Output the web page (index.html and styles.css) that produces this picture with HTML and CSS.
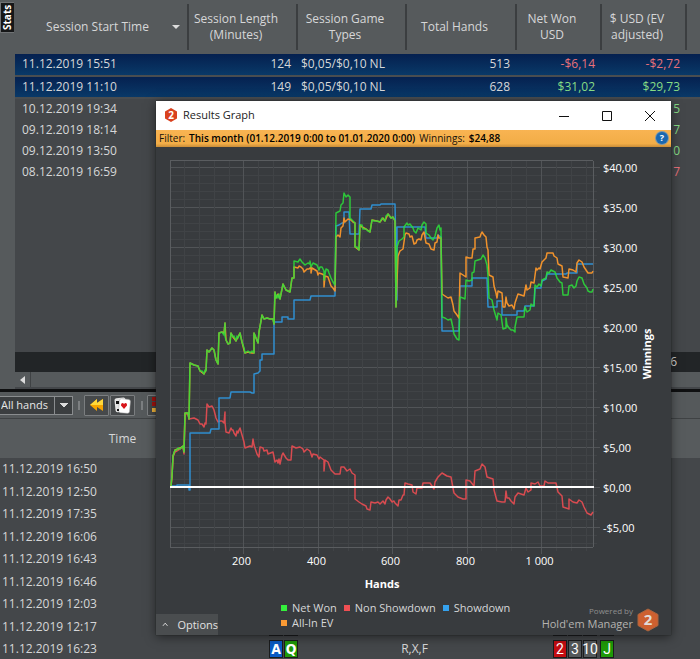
FILE: index.html
```
<!DOCTYPE html>
<html lang="en">
<head>
    <meta charset="UTF-8">
    <meta name="viewport" content="width=device-width, initial-scale=1.0">
    <title>Results Graph</title>
    <link rel="stylesheet" href="styles.css">
</head>

<body>
    <main class="app">
        <section class="sessions">
            <aside class="side">
                <button class="stats-tab">Stats</button>
            </aside>
            <div class="sessions-main">
                <table class="session-table">
                    <colgroup>
                        <col class="col-start">
                        <col class="col-length">
                        <col class="col-types">
                        <col class="col-hands">
                        <col class="col-money">
                        <col class="col-money">
                        <col>
                    </colgroup>
                    <thead>
                        <tr>
                            <th class="sorted">Session Start Time</th>
                            <th>Session Length (Minutes)</th>
                            <th>Session Game Types</th>
                            <th>Total Hands</th>
                            <th>Net Won USD</th>
                            <th>$ USD (EV adjusted)</th>
                            <th></th>
                        </tr>
                    </thead>
                    <tbody>
                        <tr class="selected"><td>11.12.2019 15:51</td><td class="num">124</td><td class="types">$0,05/$0,10 NL</td><td class="num">513</td><td class="num loss">-$6,14</td><td class="num loss">-$2,72</td><td></td></tr>
                        <tr class="selected"><td>11.12.2019 11:10</td><td class="num">149</td><td class="types">$0,05/$0,10 NL</td><td class="num">628</td><td class="num win">$31,02</td><td class="num win">$29,73</td><td></td></tr>
                        <tr><td>10.12.2019 19:34</td><td></td><td></td><td></td><td></td><td class="num win">5</td><td></td></tr>
                        <tr><td>09.12.2019 18:14</td><td></td><td></td><td></td><td></td><td class="num win">7</td><td></td></tr>
                        <tr><td>09.12.2019 13:50</td><td></td><td></td><td></td><td></td><td class="num win">0</td><td></td></tr>
                        <tr><td>08.12.2019 16:59</td><td></td><td></td><td></td><td></td><td class="num loss">7</td><td></td></tr>
                    </tbody>
                </table>
                <div class="summary">6</div>
                <div class="scrollbar">
                    <button class="scroll-left" aria-label="Scroll left"></button>
                </div>
            </div>
        </section>

        <div class="toolbar">
            <select class="hand-filter" aria-label="Hands filter">
                <option>All hands</option>
            </select>
            <span class="grip"></span>
            <button class="tool" aria-label="Rewind">
                <svg width="14" height="12" viewBox="0 0 14 12">
                    <path d="M7 0v4l6-4v12l-6-4v4L0 6z" fill="#f5a300"/>
                    <path d="M7 0v4l6-4v6H0z" fill="#ffd83a"/>
                </svg>
            </button>
            <button class="tool" aria-label="Cards">
                <svg width="17" height="17" viewBox="0 0 17 17">
                    <rect x="1" y="1" width="11" height="14" rx="2" fill="#e4e4e4" transform="rotate(-6 6 8)"/>
                    <rect x="5" y="2" width="11" height="14" rx="2" fill="#fff" stroke="#aaa" stroke-width=".5" transform="rotate(5 10 9)"/>
                    <path d="M2 4h3v3H2zM3 12h2v2H3z" fill="#111"/>
                    <path d="M10 12L7 8.500Q6.700 6 8.500 6 9.600 6 10 7.200 10.600 6 11.600 6 13.500 6.200 13 8.500z" fill="#d8151b"/>
                </svg>
            </button>
            <span class="grip"></span>
            <button class="tool" aria-label="Replay">
                <svg width="16" height="16" viewBox="0 0 16 16">
                    <path d="M0 0h4v4H0zM0 5h4v4H0zM6 0h4v4H6z" fill="#a3130f"/>
                    <path d="M0 11h4v4H0zM6 6h4v4H6z" fill="#f0b43c"/>
                </svg>
            </button>
        </div>

        <table class="hand-table">
            <colgroup>
                <col class="col-time">
                <col class="col-hole">
                <col class="col-line">
                <col>
            </colgroup>
            <thead>
                <tr><th>Time</th><th></th><th></th><th></th></tr>
            </thead>
            <tbody>
                <tr><td>11.12.2019 16:50</td><td></td><td></td><td></td></tr>
                <tr><td>11.12.2019 12:50</td><td></td><td></td><td></td></tr>
                <tr><td>11.12.2019 17:35</td><td></td><td></td><td></td></tr>
                <tr><td>11.12.2019 16:06</td><td></td><td></td><td></td></tr>
                <tr><td>11.12.2019 16:43</td><td></td><td></td><td></td></tr>
                <tr><td>11.12.2019 16:46</td><td></td><td></td><td></td></tr>
                <tr><td>11.12.2019 12:03</td><td></td><td></td><td></td></tr>
                <tr>
                    <td>11.12.2019 12:17</td>
                    <td><div class="cards hole"><span class="card heart"></span><span class="card club"></span></div></td>
                    <td></td>
                    <td><div class="cards board"><span class="card diamond"></span><span class="card club"></span><span class="card club"></span><span class="card heart turn"></span></div></td>
                </tr>
                <tr>
                    <td>11.12.2019 16:23</td>
                    <td><div class="cards hole"><span class="card diamond">A</span><span class="card club">Q</span></div></td>
                    <td class="line">R,X,F</td>
                    <td><div class="cards board"><span class="card heart">2</span><span class="card spade">3</span><span class="card spade">10</span><span class="card club turn">J</span></div></td>
                </tr>
            </tbody>
        </table>
    </main>

    <section class="window">
        <header class="titlebar">
            <svg class="app-icon" width="12" height="14" viewBox="0 0 12 14">
                <path d="M6 0l6 3.500v7L6 14 0 10.500v-7z" fill="#d9411e"/>
                <text x="6" y="11" class="icon-two">2</text>
            </svg>
            <h1>Results Graph</h1>
            <button class="win-btn" aria-label="Minimize"><svg width="12" height="12"><path d="M1 6.500h10"/></svg></button>
            <button class="win-btn" aria-label="Maximize"><svg width="12" height="12"><path d="M1.500 1.500h9v9h-9z"/></svg></button>
            <button class="win-btn" aria-label="Close"><svg width="12" height="12"><path d="M1 1l10 10M11 1L1 11"/></svg></button>
        </header>
        <div class="filter">
            <span>Filter:</span>
            <b>This month (01.12.2019 0:00 to 01.01.2020 0:00)</b>
            <span>Winnings:</span>
            <b>$24,88</b>
            <button class="help" aria-label="Help">?</button>
        </div>

        <svg class="chart" viewBox="156 147 515 452">
            <g id="grid"></g>
            <g class="series">
                <polyline class="non-showdown" points="171,487 172,477 173,457 175,452 180,449 183,447 184,454 185,414 188,414 189,419 194,418 196,419 198,420 200,424 202,424 204,427 205,423 206,424 207,404 209,407 212,406 214,410 216,418 218,422 220,421 222,421 224,423 225,412 225,422 226,432 229,433 231,428 232,430 233,430 234,433 236,436 237,431 238,433 239,430 240,428 242,435 244,442 245,448 250,446 252,447 253,439 254,445 257,454 259,457 260,447 263,448 264,451 267,450 268,454 273,452 274,457 275,462 277,460 278,463 279,459 280,464 282,455 283,453 286,458 288,460 291,460 292,446 296,448 300,447 303,449 304,452 307,449 310,451 312,457 313,454 317,455 319,459 320,457 324,460 324,471 325,460 328,462 331,470 333,472 335,474 340,474 341,467 344,467 347,471 350,469 352,473 355,475 355,499 359,502 362,504 366,506 367,509 370,510 371,502 375,503 378,502 380,504 383,501 385,504 386,500 388,497 390,499 392,502 394,501 395,503 398,506 399,500 401,500 403,495 404,495 405,483 408,484 412,485 413,492 416,494 417,488 422,488 423,483 430,483 432,486 434,489 435,482 438,477 442,473 447,476 451,477 453,488 454,493 458,497 463,499 466,499 466,480 470,481 474,486 475,471 480,469 482,464 485,467 487,477 493,479 494,490 497,501 502,502 505,502 506,491 507,498 509,498 511,501 514,504 515,497 518,493 524,495 526,488 528,492 531,490 531,483 535,484 538,482 540,486 544,486 545,481 548,483 556,483 558,492 560,494 562,496 563,507 569,509 569,499 573,502 577,503 579,500 582,502 584,507 587,513 591,515 593,512"/>
                <polyline class="showdown" points="171,486 177,486 177,485 189,485 189,490 190,490 190,433 210,433 211,429 219,429 219,398 230,398 231,392 250,392 252,393 254,393 254,374 258,373 260,371 260,360 262,360 262,354 274,354 274,322 282,322 282,317 288,317 288,319 294,319 294,300 310,300 311,296 335,296 336,226 339,225 342,223 344,223 344,212 349,212 350,234 359,234 360,209 371,209 372,205 380,205 381,204 395,204 397,300 397,227 425,227 426,238 437,238 438,235 441,237 442,331 459,331 460,286 472,286 472,278 487,278 488,307 497,307 497,301 502,301 502,315 517,315 517,311 524,311 525,306 534,306 535,288 541,288 542,281 546,279 547,274 566,274 567,273 577,273 577,264 593,264"/>
                <polyline class="all-in" points="171,486 172,476 173,456 175,450 180,448 183,446 184,452 185,413 188,413 189,419 190,363 194,365 198,366 200,371 204,374 206,370 207,350 209,352 212,348 214,350 216,360 218,364 219,333 222,332 224,333 225,323 226,340 228,344 230,343 231,333 233,337 236,341 238,337 240,333 242,342 244,350 245,353 248,352 252,353 254,353 254,333 256,338 258,343 259,332 261,321 262,315 264,319 267,318 270,319 273,319 274,324 275,292 276,298 278,294 280,299 282,289 283,284 286,290 290,292 292,278 294,278 294,267 298,268 299,266 301,267 303,269 304,272 307,269 309,269 311,267 311,273 312,268 317,271 318,275 319,273 322,274 324,275 324,287 325,276 328,277 330,283 331,286 333,288 335,291 336,237 338,235 340,237 341,228 343,226 344,218 345,222 348,219 351,220 353,222 355,223 355,247 359,250 360,225 362,227 366,229 370,232 372,220 377,221 380,222 383,218 385,221 388,214 391,218 393,217 395,221 396,307 398,256 400,251 403,249 405,235 406,233 409,234 410,237 412,236 414,244 416,243 417,240 419,239 421,240 422,235 424,232 426,243 429,244 431,249 434,250 435,243 437,242 438,235 439,238 441,238 442,294 445,296 448,298 451,297 453,305 454,311 457,315 459,318 460,273 463,275 466,277 466,257 469,258 472,258 473,249 475,249 475,238 480,237 481,234 482,232 484,235 486,237 487,247 488,250 489,275 493,277 494,286 496,293 497,298 498,291 502,293 503,307 505,307 506,297 507,303 509,306 512,305 514,309 515,303 518,294 524,296 526,285 527,290 530,288 531,282 534,283 536,268 537,270 539,268 540,269 542,262 546,258 547,253 553,253 554,256 557,258 558,264 562,266 563,277 568,278 569,269 573,270 576,272 577,263 579,260 582,262 584,267 588,273 592,273 593,271"/>
                <polyline class="net-won" points="171,486 172,476 173,456 175,450 177,450 178,448 180,449 183,446 184,452 185,413 188,413 189,419 190,363 194,365 198,366 200,371 202,371 204,374 205,370 206,371 207,350 209,352 212,348 214,350 216,360 218,364 219,333 222,332 224,335 225,323 225,336 226,340 228,344 230,343 231,333 233,337 234,336 236,341 237,336 238,338 240,333 242,342 244,348 245,353 248,351 250,353 252,351 254,353 254,333 256,338 258,343 259,332 261,321 262,315 264,319 267,318 270,319 273,319 274,324 275,292 276,298 277,295 278,298 279,294 280,299 282,289 283,284 286,290 290,292 292,278 294,278 294,261 298,262 300,259 302,262 305,265 308,263 310,264 310,261 311,267 313,263 317,265 319,270 320,267 322,267 324,271 324,280 326,269 328,270 329,273 331,278 333,282 335,285 336,213 338,212 340,211 341,205 343,203 344,193 346,197 348,195 350,197 350,218 353,221 355,223 355,247 357,247 359,250 360,225 362,225 363,229 366,229 368,231 370,232 372,220 374,221 377,221 380,222 382,218 385,221 386,216 388,214 391,218 393,217 395,221 396,307 397,247 399,241 402,239 404,237 404,227 407,223 408,225 410,224 413,228 414,231 416,233 418,228 421,230 422,225 424,222 426,224 426,233 429,235 431,238 433,240 435,236 437,228 439,225 440,230 441,228 442,317 445,318 448,320 451,319 453,328 454,334 457,339 459,340 460,297 463,298 465,299 466,280 469,281 472,280 472,273 474,272 475,261 478,260 481,259 483,255 485,258 487,265 488,276 489,298 492,300 494,310 497,320 498,313 501,315 503,329 506,328 506,318 507,325 509,328 511,330 513,330 515,332 515,327 517,317 522,317 524,317 525,307 527,312 530,310 531,304 534,306 535,285 537,287 539,284 541,286 542,280 546,278 547,272 549,273 551,270 555,272 557,278 560,282 562,283 563,295 568,295 569,286 572,285 574,288 576,286 577,281 579,277 582,278 584,284 587,288 588,291 590,292 592,292 593,289"/>
            </g>
            <path class="zero" d="M170 487h424"/>
            <g id="labels"></g>
            <text class="axis-title" x="382" y="588">Hands</text>
            <text class="axis-title" transform="translate(651 354) rotate(-90)">Winnings</text>
        </svg>

        <footer class="window-footer">
            <button class="options">
                <svg width="7" height="5" viewBox="0 0 7 5"><path d="M1 4l2.500-3L6 4"/></svg>
                Options
            </button>
            <ul class="legend">
                <li class="net-won">Net Won</li>
                <li class="non-showdown">Non Showdown</li>
                <li class="showdown">Showdown</li>
                <li class="all-in">All-In EV</li>
            </ul>
            <div class="powered">
                <div>
                    <small>Powered by</small>
                    <span class="brand">Hold'em Manager</span>
                </div>
                <svg width="22" height="24" viewBox="0 0 22 24">
                    <path d="M11 1l10 5.500v11L11 23 1 17.500v-11z" fill="#cd6030" stroke="#a8653f"/>
                    <text x="11" y="17" class="logo-two">2</text>
                </svg>
            </div>
        </footer>
    </section>

    <script>
        const ns = "http://www.w3.org/2000/svg"
        const grid = document.querySelector("#grid")
        const labels = document.querySelector("#labels")

        // plot area inside the svg
        const left = 170, right = 593, top_edge = 161, bottom = 547
        const zeroY = 487, dollar = 8
        const zeroX = 169, step = 14.88

        function line(cls, x1, y1, x2, y2){
            const el = document.createElementNS(ns, "path")
            el.setAttribute("class", cls)
            el.setAttribute("d", `M${x1} ${y1}L${x2} ${y2}`)
            grid.appendChild(el)
        }

        function label(cls, x, y, value){
            const el = document.createElementNS(ns, "text")
            el.setAttribute("class", cls)
            el.setAttribute("x", x)
            el.setAttribute("y", y)
            el.textContent = value
            labels.appendChild(el)
        }

        // one thin line per dollar and a half step, a thick one every five
        for(let value = -7; value <= 40; value++){
            const y = zeroY - value * dollar + 0.5
            if(value % 5 === 0){
                line("major", left, y, right + 7, y)
                label("tick-y", 603, y + 4, (value < 0 ? "-$" : "$") + Math.abs(value) + ",00")
            }else{
                line("minor", left, y, right + 4, y)
            }
        }

        // every 40 hands
        for(let i = 1; i <= 28; i++){
            const x = Math.round(zeroX + i * step) + 0.5
            if(i % 5 === 0){
                line("major", x, top_edge, x, bottom + 7)
                label("tick-x", x - 2, 565, i === 25 ? "1 000" : i * 40)
            }else{
                line("minor", x, top_edge, x, bottom + 4)
            }
        }

        line("frame", left + 0.5, top_edge, left + 0.5, bottom)
        line("frame", right + 0.5, top_edge, right + 0.5, bottom)
        line("frame", left, top_edge - 0.5, right, top_edge - 0.5)
        line("frame", left, bottom + 0.5, right, bottom + 0.5)
    </script>
</body>
</html>
```
FILE: styles.css
```
*{
    margin: 0;
    padding: 0;
    box-sizing: border-box;
}
body{
    height: 100vh;
    overflow: hidden;
    position: relative;
    background-color: #44474a;
    color: #d6d7d8;
    font-family: "Open Sans", "Noto Sans", sans-serif;
    font-size: 12px;
    line-height: 16px;
}
button, select{
    font: inherit;
    color: inherit;
    border: none;
    background: none;
}
table{
    width: 100%;
    table-layout: fixed;
    border-collapse: collapse;
}
th{
    font-weight: 400;
}
td{
    white-space: nowrap;
}

/* sessions */
.sessions{
    display: flex;
    height: 389px;
    background-color: #565a5c;
}
.side{
    width: 15px;
}
.stats-tab{
    width: 14px;
    height: 31px;
    margin-top: 2px;
    background-color: #161718;
    border: 1px solid #707375;
    border-left: none;
    color: white;
    font-size: 10px;
    font-weight: 700;
    line-height: 11px;
    writing-mode: vertical-rl;
    transform: rotate(180deg);
}
.sessions-main{
    flex: 1;
    min-width: 0;
    display: flex;
    flex-direction: column;
    background-color: #44474a;
}
.col-start{ width: 174px; }
.col-length{ width: 109px; }
.col-types{ width: 109px; }
.col-hands{ width: 110px; }
.col-money{ width: 85px; }
.session-table th{
    height: 54px;
    padding: 0 15px 0 0;
    background: linear-gradient(#3b3e40, #3b3e40) right center / 2px 46px no-repeat #565a5c;
}
.session-table th:last-child{
    background: #565a5c;
}
.session-table .sorted{
    padding-right: 9px;
}
.session-table .sorted::after{
    content: "";
    float: right;
    margin: 6px 0 0 -8px;
    border: 4px solid transparent;
    border-top-color: #dcdcdc;
    border-bottom: none;
}
.session-table td{
    height: 21px;
    padding: 0 7px;
}
.session-table .types{
    padding-left: 3px;
}
.session-table .selected{
    background: linear-gradient(#05204f, #093a69);
}
.session-table .selected td{
    height: 22px;
    padding-bottom: 1px;
    border-bottom: 2px solid #494d50;
}
.num{
    text-align: right;
}
.session-table .win{
    color: #86dc86;
}
.session-table .loss{
    color: #e8717a;
}
.summary{
    margin-top: auto;
    height: 20px;
    padding-right: 23px;
    text-align: right;
    line-height: 20px;
    background-color: #222527;
}
.scrollbar{
    height: 15px;
    margin-bottom: 2px;
    background-color: #565a5c;
}
.scroll-left{
    width: 16px;
    height: 15px;
    display: flex;
    align-items: center;
    justify-content: center;
    border-right: 1px solid #3f4244;
}
.scroll-left::before{
    content: "";
    border: 4px solid transparent;
    border-right: 5px solid #dcdcdc;
    border-left: none;
}

/* toolbar */
.toolbar{
    display: flex;
    align-items: center;
    height: 30px;
    border-top: 3px solid #0f1011;
    border-bottom: 1px solid #3f4244;
    background-color: #55595b;
}
.hand-filter{
    appearance: none;
    width: 73px;
    height: 19px;
    padding: 0 0 0 1px;
    border: 1px solid #8a8d8f;
    border-left: none;
    background:
        linear-gradient(#dcdcdc, #dcdcdc) 60px 6px / 8px 1px no-repeat,
        linear-gradient(45deg, transparent 50%, #dcdcdc 50%) 60px 7px / 4px 4px no-repeat,
        linear-gradient(-45deg, transparent 50%, #dcdcdc 50%) 64px 7px / 4px 4px no-repeat,
        linear-gradient(#8a8d8f, #8a8d8f) 54px 0 / 1px 100% no-repeat,
        #3b3e40;
    color: #e6e6e6;
    font-size: 11px;
}
.grip{
    width: 2px;
    height: 9px;
    margin: 0 4px 0 5px;
    background-color: #7c7f81;
}
.tool{
    display: flex;
    align-items: center;
    justify-content: center;
    width: 25px;
    height: 21px;
    margin-right: 1px;
    border: 1px solid #7b7e80;
    border-radius: 1px;
    background-color: #46494b;
}

/* hands */
.col-time{ width: 245px; }
.col-hole{ width: 85px; }
.col-line{ width: 169px; }
.hand-table th{
    height: 39px;
    background-color: #575b5d;
}
.hand-table td{
    height: 22px;
    padding: 0 2px;
}
.hand-table tr:nth-child(even) td{
    height: 23px;
}
.hand-table .line{
    text-align: center;
}
.cards{
    display: flex;
    height: 18px;
    gap: 1px;
}
.hole{
    padding-left: 22px;
}
.board{
    padding-left: 52px;
}
.card{
    width: 14px;
    height: 18px;
    border: 1px solid #1b1c1d;
    color: white;
    font-family: "DejaVu Sans Condensed", "DejaVu Sans", sans-serif;
    font-size: 14px;
    line-height: 17px;
    text-align: center;
    font-weight: 700;
}
.board .card{
    display: flex;
    justify-content: center;
    font-family: Roboto, sans-serif;
    font-weight: 400;
}
.board .turn{
    margin-left: 2px;
}
.heart{ background-color: #c40d12; }
.club{ background-color: #1e9a08; }
.diamond{ background-color: #0a5bc4; }
.spade{ background-color: #55595b; }

/* results graph window */
.window{
    position: absolute;
    left: 156px;
    top: 101px;
    width: 515px;
    background-color: #383b3e;
    box-shadow: 0 2px 10px rgba(0, 0, 0, 0.5), 0 0 1px #1e2022;
}
.titlebar{
    display: flex;
    align-items: center;
    height: 29px;
    padding: 0 0 1px 9px;
    background-color: white;
    color: #1c1c1c;
}
.titlebar h1{
    flex: 1;
    padding-left: 6px;
    font-size: 11px;
    font-weight: 400;
}
.win-btn{
    width: 43px;
    height: 28px;
}
.win-btn svg{
    vertical-align: middle;
    fill: none;
    stroke: #111;
}
.filter{
    display: flex;
    align-items: center;
    gap: 4px;
    height: 17px;
    padding: 0 3px 1px;
    background: linear-gradient(#f9b452, #f2ad47 80%, #c98d38);
    color: #15120c;
    font-size: 10px;
}
.filter b{
    font-weight: 600;
    color: black;
}
.help{
    width: 12px;
    height: 12px;
    margin-left: auto;
    border-radius: 50%;
    background-color: #1a68b0;
    box-shadow: 0 0 0 1px #7c96a8;
    color: white;
    font-size: 9px;
    font-weight: 700;
    line-height: 12px;
}
.chart{
    display: block;
    width: 100%;
}
.chart text{
    fill: white;
    font-size: 11px;
}
.minor{
    stroke: #404346;
}
.major{
    stroke: #515457;
}
.frame{
    stroke: #5a5d60;
}
.series polyline{
    fill: none;
    stroke-width: 1.500;
    stroke-linejoin: round;
}
.series .net-won{ stroke: #2be03a; stroke-opacity: 0.85; }
.series .non-showdown{ stroke: #d84b50; }
.series .showdown{ stroke: #2f8fd0; }
.series .all-in{ stroke: #f0922c; }
.zero{
    stroke: white;
    stroke-width: 2;
}
.tick-x{
    text-anchor: middle;
}
.chart .axis-title{
    font-weight: 700;
    text-anchor: middle;
}
.window-footer{
    display: grid;
    grid-template-columns: 125px 1fr auto;
    height: 36px;
}
.options{
    align-self: end;
    display: flex;
    align-items: center;
    gap: 9px;
    width: 62px;
    height: 21px;
    padding-left: 6px;
    background-color: #4a4d4f;
    color: #e2e2e2;
    font-size: 11px;
}
.options svg{
    fill: none;
    stroke: #e2e2e2;
}
.legend{
    display: flex;
    flex-wrap: wrap;
    align-content: flex-start;
    column-gap: 7px;
    padding-top: 1px;
    list-style: none;
    font-size: 11px;
    line-height: 15px;
}
.legend li{
    display: flex;
    align-items: center;
    gap: 5px;
}
.legend li::before{
    content: "";
    width: 6px;
    height: 6px;
}
.legend .net-won::before{ background-color: #34f03c; }
.legend .non-showdown::before{ background-color: #f04f53; }
.legend .showdown::before{ background-color: #35a2ee; }
.legend .all-in::before{ background-color: #fa9a34; }
.powered{
    display: flex;
    gap: 4px;
    padding: 6px 12px 0 0;
    color: #b5b3b0;
    font-size: 11px;
    line-height: 13px;
    text-align: right;
}
.powered svg{
    margin-top: 3px;
}
.powered small, .brand{
    display: block;
}
.powered small{
    font-size: 8px;
    line-height: 12px;
    color: #8f8f8f;
}
.icon-two, .logo-two{
    fill: white;
    font-weight: 700;
    text-anchor: middle;
}
.icon-two{
    font-size: 10px;
}
.logo-two{
    fill: #e2dcd8;
    font-size: 15px;
}
```
